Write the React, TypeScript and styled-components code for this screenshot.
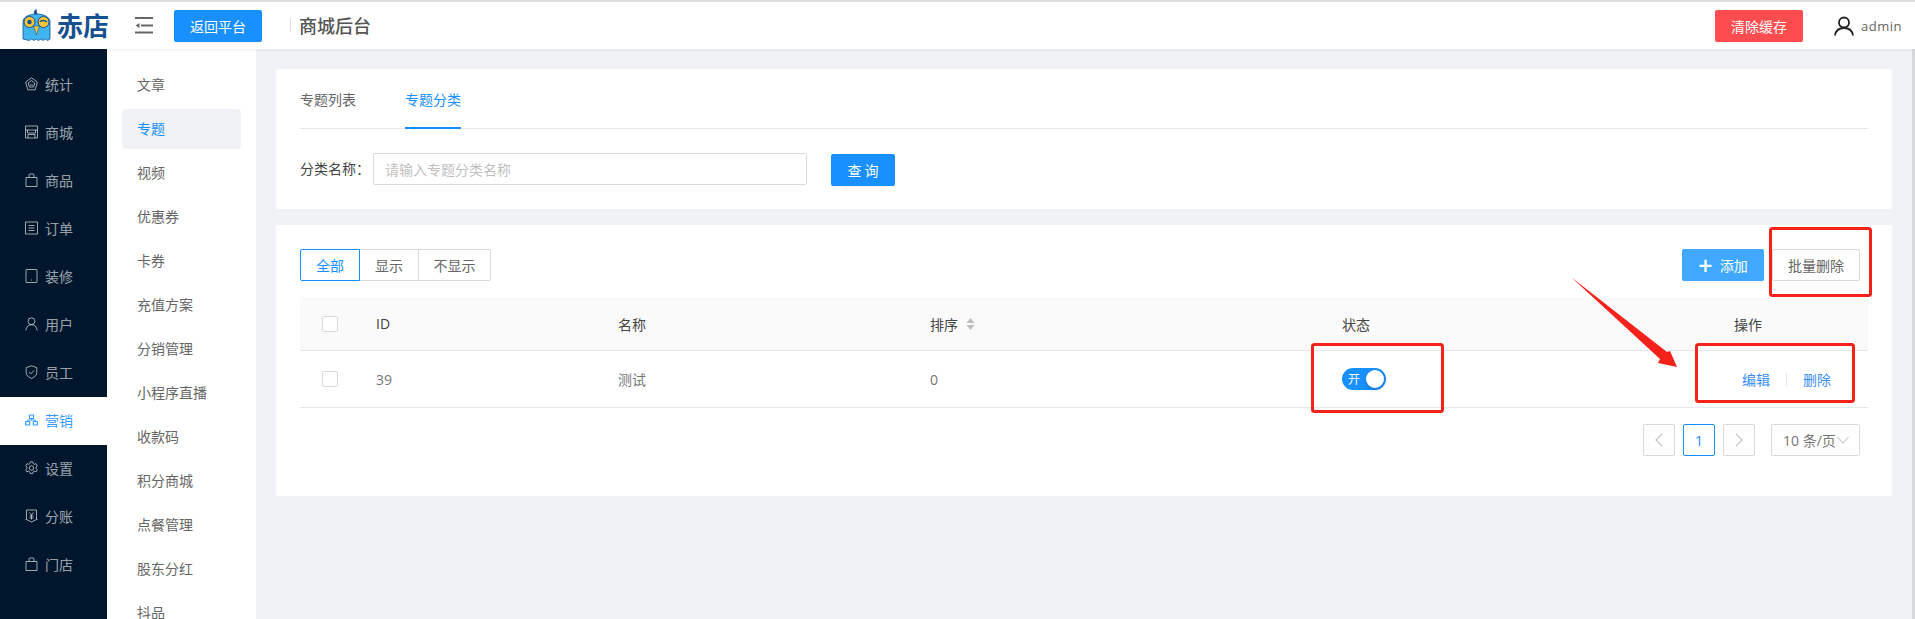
import React from "react";
import styled, { createGlobalStyle } from "styled-components";

const Global = createGlobalStyle`
  html, body { margin: 0; padding: 0; height: 100%; overflow: hidden; }
  body { font-family: "Open Sans", "Noto Sans CJK SC", sans-serif; font-size: 14px; color: #555; }
  * { box-sizing: border-box; }
`;

const Page = styled.div`
  position: relative; width: 1915px; height: 619px; display: flex; flex-direction: column;
  overflow: hidden; background: #f0f2f5;
`;
const Header = styled.header`
  position: relative; z-index: 2; flex: 0 0 49px; display: flex; align-items: center; background: #fff;
  border-top: 2px solid #dedede; box-shadow: 0 1px 4px rgba(0, 21, 41, 0.08); padding: 0 13px 0 22px;
`;
const LogoText = styled.span`
  margin-left: 6px; width: 78px; font-size: 26px; line-height: 30px; font-weight: 700; color: #17508f; letter-spacing: 0;
`;
const SolidButton = styled.button<{ $color?: string; $w?: number }>`
  width: ${(p) => p.$w ?? 88}px; height: 32px; padding: 0; border: 0; border-radius: 2px;
  background: ${(p) => p.$color ?? "#1890ff"}; color: #fff; font: inherit; font-size: 14px;
  box-shadow: 0 2px 0 rgba(0, 0, 0, 0.03); display: inline-flex; align-items: center; justify-content: center;
`;
const TopDivider = styled.span`
  width: 1px; height: 13px; background: #dcdcdc; margin: 0 8px 0 28px;
`;
const TopTitle = styled.span`
  font-size: 18px; font-weight: 500; color: #555; line-height: 24px;
`;
const Spacer = styled.div` flex: 1; `;
const UserName = styled.span`
  flex: 0 0 38px; margin-left: 7px; color: #666; font-size: 13px; letter-spacing: 0.5px; white-space: nowrap;
`;
const Body = styled.div`
  flex: 1; display: flex; min-height: 0;
`;
const Sidebar = styled.nav`
  flex: 0 0 107px; background: #00162c; padding-top: 12px;
`;
const SideItem = styled.div<{ $active?: boolean }>`
  height: 48px; display: flex; align-items: center; gap: 7px; padding: 0 0 2px 25px;
  font-size: 14px; color: ${(p) => (p.$active ? "#3a9bff" : "rgba(255,255,255,0.62)")};
  background: ${(p) => (p.$active ? "#fff" : "transparent")};
`;
const SubMenu = styled.nav`
  flex: 0 0 149px; background: #fff; padding: 16px 15px 0; overflow: hidden;
`;
const SubItem = styled.div<{ $active?: boolean }>`
  flex: none; height: 40px; margin-bottom: 4px; display: flex; align-items: center; padding: 0 0 2px 15px;
  border-radius: 4px; white-space: nowrap;
  color: ${(p) => (p.$active ? "#1890ff" : "#666")};
  background: ${(p) => (p.$active ? "#f0f2f5" : "transparent")};
`;
const Main = styled.main`
  flex: 1; padding: 20px 20px 0; border-right: 3px solid #d8d8dc;
`;
const Card = styled.section`
  background: #fff; border-radius: 2px; padding: 0 24px;
`;
const FilterCard = styled(Card)`
  height: 140px; margin-bottom: 16px;
`;
const TableCard = styled(Card)`
  height: 271px; padding-top: 24px;
`;
const Tabs = styled.div`
  height: 60px; display: flex; gap: 49px; border-bottom: 1px solid #e8e8e8;
`;
const Tab = styled.div<{ $active?: boolean }>`
  height: 60px; padding-top: 20px; line-height: 22px; color: ${(p) => (p.$active ? "#1890ff" : "#666")};
  border-bottom: 2px solid ${(p) => (p.$active ? "#1890ff" : "transparent")};
`;
const FilterRow = styled.div`
  display: flex; align-items: flex-start; margin-top: 24px;
`;
const Label = styled.label`
  width: 73px; line-height: 32px; color: #444;
`;
const Input = styled.input`
  width: 434px; height: 32px; border: 1px solid #d9d9d9; border-radius: 2px; padding: 0 11px; margin-right: 24px;
  font: inherit; font-size: 14px; outline: none;
  &::placeholder { color: #bfbfbf; opacity: 1; }
`;
const QueryButton = styled(SolidButton)`
  margin-top: 1px; letter-spacing: 3px; padding-left: 3px;
`;
const Toolbar = styled.div`
  height: 32px; margin-bottom: 16px; padding-right: 8px; display: flex; align-items: center; gap: 8px;
`;
const Segment = styled.div` display: flex; `;
const SegmentItem = styled.div<{ $active?: boolean; $w: number }>`
  width: ${(p) => p.$w}px; height: 32px; margin-left: -1px; display: flex; align-items: center; justify-content: center;
  background: #fff; position: relative; z-index: ${(p) => (p.$active ? 1 : 0)};
  border: 1px solid ${(p) => (p.$active ? "#1890ff" : "#d9d9d9")};
  color: ${(p) => (p.$active ? "#1890ff" : "#666")};
  &:first-child { margin-left: 0; border-radius: 2px 0 0 2px; }
  &:last-child { border-radius: 0 2px 2px 0; }
`;
const AddPlus = styled.span`
  font-size: 25px; font-weight: 600; line-height: 20px; margin-right: 7px;
`;
const OutlineButton = styled.button`
  width: 88px; height: 32px; padding: 0; background: #fff; border: 1px solid #d9d9d9; border-radius: 2px;
  color: #666; font: inherit; font-size: 14px;
`;
const Row = styled.div<{ $head?: boolean }>`
  display: grid; grid-template-columns: 76px 242px 312px 412px 392px 134px; align-items: center;
  height: ${(p) => (p.$head ? 54 : 57)}px; border-bottom: 1px solid #e8e8e8;
  background: ${(p) => (p.$head ? "#fafafa" : "#fff")}; color: ${(p) => (p.$head ? "#444" : "#777")};
`;
const CheckCell = styled.div` padding-left: 22px; display: flex; `;
const Check = styled.span`
  width: 16px; height: 16px; border: 1px solid #d9d9d9; border-radius: 2px; background: #fff;
`;
const SortCell = styled.div` display: flex; align-items: center; gap: 8px; `;
const Switch = styled.div`
  width: 44px; height: 22px; border-radius: 11px; background: #1890ff; display: flex; align-items: center;
  justify-content: space-between; padding: 0 2px 0 6px; color: #fff; font-size: 12px;
`;
const Knob = styled.span`
  width: 18px; height: 18px; border-radius: 50%; background: #fff; box-shadow: 0 2px 4px rgba(0, 35, 11, 0.2);
`;
const Actions = styled.div`
  display: flex; align-items: center; padding-left: 8px; color: #3a8ef6;
`;
const ActionDivider = styled.span`
  width: 1px; height: 14px; background: #e8e8e8; margin: 0 16px;
`;
const Pager = styled.div`
  margin-top: 16px; padding-right: 8px; display: flex; justify-content: flex-end; gap: 8px;
`;
const PageBox = styled.div<{ $active?: boolean }>`
  width: 32px; height: 32px; display: flex; align-items: center; justify-content: center; border-radius: 2px;
  border: 1px solid ${(p) => (p.$active ? "#1890ff" : "#d9d9d9")}; color: ${(p) => (p.$active ? "#1890ff" : "#c4c4c4")};
`;
const PageSelect = styled.div`
  width: 89px; height: 32px; margin-left: 8px; padding-left: 11px; display: flex; align-items: center; gap: 1px;
  border: 1px solid #d9d9d9; border-radius: 2px; color: #777; white-space: nowrap;
`;
const Annotations = styled.svg`
  position: absolute; left: 0; top: 0; z-index: 5; pointer-events: none;
`;

const Ic = ({ children }: { children: React.ReactNode }) => (
  <svg width="13" height="14" viewBox="0 0 13 14" fill="none" stroke="currentColor" strokeWidth="1" strokeLinejoin="round" style={{ flex: "none" }}>
    {children}
  </svg>
);

const sideItems: [string, React.ReactNode][] = [
  ["统计", <><path d="M6.5 0.8 12.4 5l-2.200 7.800H2.800L0.600 5Z" /><path d="M6.5 3.500 9.800 6l-1.200 4H4.400L3.200 6Z" /><path d="M4.800 8h3.400" /></>],
  ["商城", <><rect x="0.5" y="1" width="12" height="12" /><path d="M0.5 5h12M2.5 5v3h8V5M3 13V9.5h7V13" /></>],
  ["商品", <><path d="M1 4.5h11v9H1Z" /><path d="M4 4.5V2a1 1 0 0 1 1-1h3a1 1 0 0 1 1 1v2.5" /></>],
  ["订单", <><rect x="0.5" y="1" width="12" height="12" /><path d="M3.5 4.5h6M3.5 7h6M3.5 9.5h6" /></>],
  ["装修", <><rect x="1" y="0.5" width="11" height="13" rx="0.5" /><path d="M6 11h1" /></>],
  ["用户", <><circle cx="6.5" cy="4.2" r="3.4" /><path d="M0.8 13.5c.4-3.6 2.6-5.8 5.7-5.8s5.3 2.2 5.7 5.8" /></>],
  ["员工", <><path d="M6.5 0.8 11.8 2.6v5c0 2.700-2.400 4.700-5.300 5.800C3.600 12.300 1.200 10.300 1.200 7.600v-5Z" /><path d="M4 6.800l2 2 3-3.400" /></>],
  ["营销", <><rect x="4.500" y="2" width="4" height="3.500" strokeWidth="1.200" /><rect x="0.700" y="8.500" width="4" height="3.500" strokeWidth="1.200" /><rect x="8.300" y="8.500" width="4" height="3.500" strokeWidth="1.200" /><path d="M2.700 8.500V7h7.600v1.500M6.500 5.500V7" /></>],
  ["设置", <><circle cx="6.5" cy="7" r="2.200" /><path d="M5.300 0.800h2.400l.4 1.800 1.300.7 1.700-.6 1.200 2.100-1.300 1.200v1.500l1.300 1.200-1.200 2.100-1.700-.6-1.300.7-.4 1.800H5.300l-.4-1.800-1.300-.7-1.700.6L.700 8.700 2 7.500V6L.700 4.800l1.200-2.100 1.700.6 1.300-.7Z" /></>],
  ["分账", <><path d="M1.500 1h10v9.500L6.500 13l-5-2.500Z" /><path d="M0.500 10.500 1.500 10M12.500 10.500l-1-.5M4.500 3.500l2 2.500 2-2.500M4.500 7h4M4.500 9h4M6.500 6v4.500" /></>],
  ["门店", <><path d="M1 4.500h11v9H1Z" /><path d="M4 4.500V2a1 1 0 0 1 1-1h3a1 1 0 0 1 1 1v2.500" /></>],
];

const subItems = ["文章", "专题", "视频", "优惠券", "卡券", "充值方案", "分销管理", "小程序直播", "收款码", "积分商城", "点餐管理", "股东分红", "抖品"];

const Owl = () => (
  <svg width="29" height="33" viewBox="0 0 29 33" style={{ flex: "none", marginTop: -3 }}>
    <path d="M13 7c-2-2-1-5 1.500-6 .5 1.500-.2 2 .5 3.500L16 7Z" fill="#17508f" />
    <path d="M1 14C1 9 7 6 14.500 6S28 9 28 14v17l-2.300 1.500-2.300-1.500-2.300 1.500-2.300-1.500-2.300 1.500-2.300-1.500-2.300 1.500-2.300-1.500-2.300 1.500L1 31Z" fill="#3fb4ee" stroke="#17508f" strokeWidth="0.8" />
    <circle cx="7.500" cy="14" r="5.500" fill="#f8c636" stroke="#17508f" />
    <circle cx="21.500" cy="14" r="5.500" fill="#f8c636" stroke="#17508f" />
    <circle cx="7.500" cy="14" r="2.200" fill="#17508f" />
    <path d="M18 14c1-2 5-2 7 0" stroke="#17508f" strokeWidth="1.500" fill="none" />
    <path d="M11.500 18h6l-3 9Z" fill="#f8c636" stroke="#17508f" strokeWidth="0.6" />
  </svg>
);

const CollapseIcon = () => (
  <svg width="18" height="17" viewBox="0 0 18 17" style={{ margin: "0 21px 0 0", flex: "none" }}>
    <path d="M0 1h18M6 8.500h12M0 15.500h18" stroke="#666" strokeWidth="2" />
    <path d="M4.500 6v5L0.500 8.500Z" fill="#666" />
  </svg>
);

const UserIcon = () => (
  <svg width="20" height="20" viewBox="0 0 20 20" fill="none" stroke="#222" strokeWidth="1.800" style={{ flex: "none", marginLeft: 31 }}>
    <circle cx="10" cy="6.500" r="5" />
    <path d="M1 19.500c.6-4.500 4-7.500 9-7.500s8.400 3 9 7.500" />
  </svg>
);

const SortIcon = () => (
  <svg width="9" height="14" viewBox="0 0 9 14" style={{ flex: "none" }}>
    <path d="M4.500 1 8.500 6H.5Z" fill="#bfbfbf" />
    <path d="M4.500 13 .5 8h8Z" fill="#bfbfbf" />
  </svg>
);

const Chevron = ({ dir }: { dir: "l" | "r" }) => (
  <svg width="8" height="14" viewBox="0 0 8 14" fill="none" stroke="#c4c4c4" strokeWidth="1.200">
    <path d={dir === "l" ? "M7 1 1 7l6 6" : "M1 1l6 6-6 6"} />
  </svg>
);

const DownIcon = () => (
  <svg width="12" height="8" viewBox="0 0 12 8" fill="none" stroke="#c4c4c4" strokeWidth="1.100" style={{ flex: "none" }}>
    <path d="M0.500 1 6 7l5.500-6" />
  </svg>
);

export default function App() {
  return (
    <Page>
      <Global />
      <Header>
        <Owl />
        <LogoText>赤店</LogoText>
        <CollapseIcon />
        <SolidButton>返回平台</SolidButton>
        <TopDivider />
        <TopTitle>商城后台</TopTitle>
        <Spacer />
        <SolidButton $color="#ff4d4f">清除缓存</SolidButton>
        <UserIcon />
        <UserName>admin</UserName>
      </Header>
      <Body>
        <Sidebar>
          {sideItems.map(([name, icon]) => (
            <SideItem key={name} $active={name === "营销"}>
              <Ic>{icon}</Ic>
              {name}
            </SideItem>
          ))}
        </Sidebar>
        <SubMenu>
          {subItems.map((s) => (
            <SubItem key={s} $active={s === "专题"}>{s}</SubItem>
          ))}
        </SubMenu>
        <Main>
          <FilterCard>
            <Tabs>
              <Tab>专题列表</Tab>
              <Tab $active>专题分类</Tab>
            </Tabs>
            <FilterRow>
              <Label>分类名称：</Label>
              <Input placeholder="请输入专题分类名称" />
              <QueryButton $w={64}>查询</QueryButton>
            </FilterRow>
          </FilterCard>
          <TableCard>
            <Toolbar>
              <Segment>
                <SegmentItem $active $w={60}>全部</SegmentItem>
                <SegmentItem $w={60}>显示</SegmentItem>
                <SegmentItem $w={73}>不显示</SegmentItem>
              </Segment>
              <Spacer />
              <SolidButton $color="#40a9ff" $w={82}>
                <AddPlus>+</AddPlus>添加
              </SolidButton>
              <OutlineButton>批量删除</OutlineButton>
            </Toolbar>
            <Row $head>
              <CheckCell><Check /></CheckCell>
              <div>ID</div>
              <div>名称</div>
              <SortCell>排序<SortIcon /></SortCell>
              <div>状态</div>
              <div>操作</div>
            </Row>
            <Row>
              <CheckCell><Check /></CheckCell>
              <div>39</div>
              <div>测试</div>
              <div>0</div>
              <div><Switch>开<Knob /></Switch></div>
              <Actions>编辑<ActionDivider />删除</Actions>
            </Row>
            <Pager>
              <PageBox><Chevron dir="l" /></PageBox>
              <PageBox $active>1</PageBox>
              <PageBox><Chevron dir="r" /></PageBox>
              <PageSelect>10 条/页<DownIcon /></PageSelect>
            </Pager>
          </TableCard>
        </Main>
      </Body>
      <Annotations width="1915" height="619" viewBox="0 0 1915 619" fill="none" stroke="#f5221b" strokeWidth="3">
        <rect x="1770.500" y="228.500" width="100" height="67" rx="2" />
        <rect x="1312.500" y="344.500" width="130" height="67" rx="2" />
        <rect x="1696.500" y="344.500" width="157" height="57" rx="2" />
        <polygon points="1571,277 1667,352 1670,351 1677,367 1658,363 1660,359" fill="#f5221b" stroke="none" />
      </Annotations>
    </Page>
  );
}
